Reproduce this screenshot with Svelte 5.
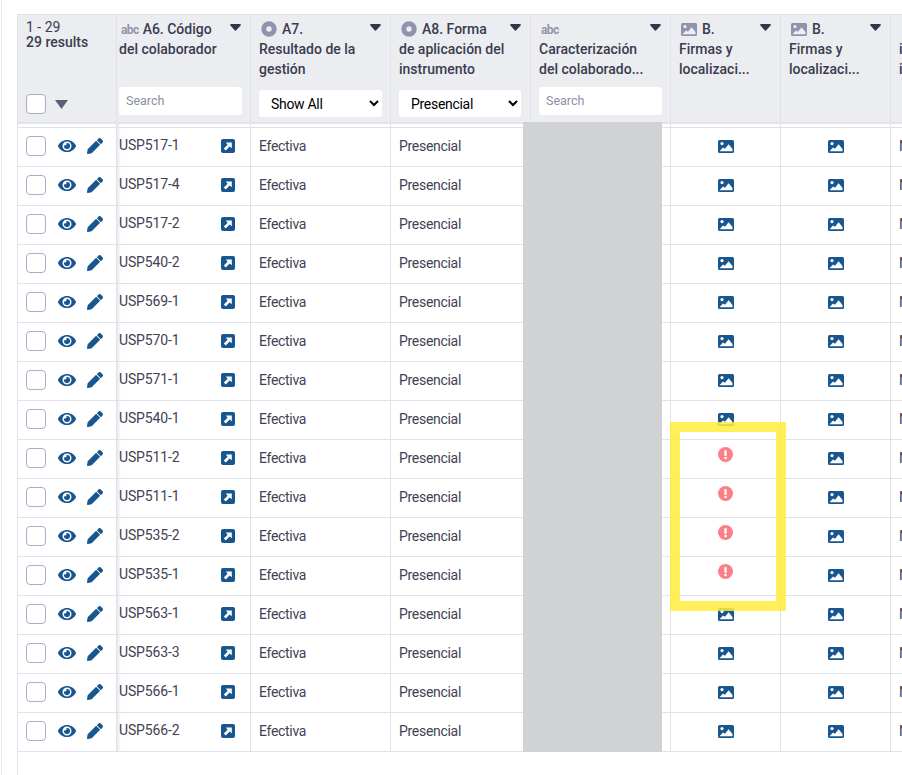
<script>
	const codes = [
		'USP517-1', 'USP517-4', 'USP517-2', 'USP540-2', 'USP569-1', 'USP570-1', 'USP571-1', 'USP540-1',
		'USP511-2', 'USP511-1', 'USP535-2', 'USP535-1', 'USP563-1', 'USP563-3', 'USP566-1', 'USP566-2'
	];
	const failed = ['USP511-2', 'USP511-1', 'USP535-2', 'USP535-1'];
	const spacer = [0, 1, 2, 3, 4, 5, 6, 7];
</script>

{#snippet caret()}
	<svg class="caret" viewBox="0 0 11 7"><path d="M1 0h9c.8 0 1.2 1 .6 1.6L6 6.4c-.3.3-.8.3-1.1 0L.4 1.6C-.2 1 .2 0 1 0z" /></svg>
{/snippet}

{#snippet radioIcon()}
	<svg class="type-icon radio" viewBox="0 0 16 16"><circle cx="8" cy="8" r="5.2" fill="none" stroke="#8f93ab" stroke-width="5" /></svg>
{/snippet}

{#snippet imageIcon(cls, bg, fg)}
	<svg class={cls} viewBox="0 0 16 13">
		<rect width="16" height="13" rx="1.5" fill={bg} />
		<circle cx="4" cy="3.6" r="1.6" fill={fg} />
		<path d="M1.5 11.2 L5 7.4 L7 8.8 L10.6 4.2 L14.5 9 V11.2 Z" fill={fg} />
	</svg>
{/snippet}

<div class="page">
	<div class="grid">
		<div class="row head">
			<div class="cell col1">
				<div class="count">1 - 29<br /><b>29 results</b></div>
				<div class="select-all">
					<span class="check"></span>
					<svg class="sort" viewBox="0 0 13 9"><path d="M0 0h13L6.5 9z" /></svg>
				</div>
			</div>
			<div class="cell code">
				<div class="title"><span class="abc">abc</span><span class="grow">A6. Código</span>{@render caret()}</div>
				<div class="line">del colaborador</div>
				<input class="search" placeholder="Search" />
			</div>
			<div class="cell">
				<div class="title">{@render radioIcon()}<span class="grow">A7.</span>{@render caret()}</div>
				<div class="line">Resultado de la</div>
				<div class="line">gestión</div>
				<select class="filter"><option>Show All</option><option>Efectiva</option></select>
			</div>
			<div class="cell">
				<div class="title">{@render radioIcon()}<span class="grow">A8. Forma</span>{@render caret()}</div>
				<div class="line">de aplicación del</div>
				<div class="line">instrumento</div>
				<select class="filter short"><option>Presencial</option><option>Show All</option></select>
			</div>
			<div class="cell">
				<div class="title"><span class="abc grow">abc</span>{@render caret()}</div>
				<div class="line">Caracterización</div>
				<div class="line">del colaborado...</div>
				<input class="search" placeholder="Search" />
			</div>
			<div class="cell">
				<div class="title">{@render imageIcon('type-icon picture', '#8f93ab', '#eceef3')}<span class="grow">B.</span>{@render caret()}</div>
				<div class="line">Firmas y</div>
				<div class="line">localizaci...</div>
			</div>
			<div class="cell">
				<div class="title">{@render imageIcon('type-icon picture', '#8f93ab', '#eceef3')}<span class="grow">B.</span>{@render caret()}</div>
				<div class="line">Firmas y</div>
				<div class="line">localizaci...</div>
			</div>
			<div class="cell">
				<div class="title">&nbsp;</div>
				<div class="line">incidencias</div>
				<div class="line">identificadas</div>
			</div>
		</div>

		<div class="row spacer">
			{#each spacer as i (i)}
				<div class="cell"></div>
			{/each}
		</div>

		<div class="rows">
			{#each codes as code (code)}
				<div class="row item">
					<div class="cell col1 actions">
						<span class="check"></span>
						<svg class="eye" viewBox="0 0 576 512"><path d="M572.52 241.4C518.29 135.59 410.93 64 288 64S57.68 135.64 3.48 241.41a32.35 32.35 0 0 0 0 29.19C57.71 376.41 165.07 448 288 448s230.32-71.64 284.52-177.41a32.35 32.35 0 0 0 0-29.19zM288 400a144 144 0 1 1 144-144 143.93 143.93 0 0 1-144 144zm0-240a95.31 95.31 0 0 0-25.31 3.79 47.85 47.85 0 0 1-66.9 66.9A95.78 95.78 0 1 0 288 160z" /></svg>
						<svg class="pencil" viewBox="0 0 512 512"><path d="M497.9 142.1l-46.1 46.1c-4.7 4.7-12.3 4.7-17 0l-111-111c-4.7-4.7-4.7-12.3 0-17l46.1-46.1c18.7-18.7 49.1-18.7 67.9 0l60.1 60.1c18.8 18.7 18.8 49.1 0 67.9zM284.2 99.8L21.6 362.4.4 483.9c-2.9 16.4 11.4 30.6 27.8 27.8l121.5-21.3 262.6-262.6c4.7-4.7 4.7-12.3 0-17l-111-111c-4.8-4.7-12.4-4.7-17.1 0z" /></svg>
					</div>
					<div class="cell code">
						<span class="code-text">{code}</span>
						<svg class="open" viewBox="0 0 14 14">
							<rect width="14" height="14" rx="2" fill="#17568f" />
							<path d="M2.8 9.6 L6.6 5.8 L4.8 3.4 H10.8 V9.2 L8.6 7.4 L4.8 11.4 Z" fill="#fff" />
						</svg>
					</div>
					<div class="cell text">Efectiva</div>
					<div class="cell text">Presencial</div>
					<div class="cell"></div>
					<div class="cell media">
						{#if failed.includes(code)}
							<svg class="error" viewBox="0 0 15 15">
								<circle cx="7.5" cy="7.5" r="7.5" fill="#fc7f86" />
								<rect x="6.3" y="3" width="2.4" height="6" rx="1" fill="#fff" />
								<circle cx="7.5" cy="11" r="1.3" fill="#fff" />
							</svg>
						{:else}
							{@render imageIcon('picture', '#17568f', '#fff')}
						{/if}
					</div>
					<div class="cell media">{@render imageIcon('picture', '#17568f', '#fff')}</div>
					<div class="cell text">No</div>
				</div>
			{/each}
		</div>
	</div>

	<!-- redaction block and highlight drawn over the table -->
	<div class="redacted"></div>
	<div class="highlight"></div>
</div>

<style>
	:global(body) {
		margin: 0;
		overflow: hidden;
	}

	.page {
		position: relative;
		box-sizing: border-box;
		width: 902px;
		height: 775px;
		overflow: hidden;
		background: #fff;
		padding: 14px 0 0 16px;
		border-left: 1px solid #e6e7ec;
		margin-left: 1px;
		font-family: Roboto, 'Liberation Sans', sans-serif;
		font-size: 14px;
		color: #3f4254;
	}

	.page::before {
		content: '';
		position: absolute;
		left: 15px;
		top: 14px;
		bottom: 0;
		width: 1px;
		background: #e0e1ea;
	}

	.grid {
		width: 980px;
		border-top: 1px solid #e0e1ea;
	}

	.row {
		display: grid;
		grid-template-columns: 99px 134px 140px 140px 140px 110px 110px 107px;
	}

	.cell {
		box-sizing: border-box;
		border-right: 1px solid #e0e1ea;
		padding: 0 8px;
		min-width: 0;
	}

	.head {
		height: 109px;
		background: #ecedf1;
		border-bottom: 2px solid #e3e4ea;
		box-sizing: border-box;
		color: #3a3c50;
		font-weight: 500;
		line-height: 20px;
	}

	.head .cell {
		display: flex;
		flex-direction: column;
		padding-top: 4px;
		padding-right: 9px;
	}

	.head .col1 {
		padding-top: 5px;
	}

	.count {
		font-size: 14px;
		font-weight: 400;
		line-height: 15px;
	}

	.count b {
		font-weight: 500;
	}

	.select-all {
		display: flex;
		align-items: center;
		gap: 9px;
		margin-top: auto;
		margin-bottom: 8px;
	}

	.check {
		display: block;
		box-sizing: border-box;
		width: 20px;
		height: 20px;
		flex: none;
		background: #fff;
		border: 1px solid #a9afc8;
		border-radius: 4px;
	}

	.sort {
		width: 13px;
		height: 9px;
		fill: #5c5f76;
	}

	.title {
		display: flex;
		align-items: center;
		height: 20px;
	}

	.grow {
		flex: 1;
	}

	.caret {
		width: 11px;
		height: 7px;
		margin-bottom: 3px;
		fill: #33354a;
	}

	.type-icon {
		flex: none;
		margin-right: 5px;
	}

	.radio {
		width: 16px;
		height: 16px;
		margin-left: 2px;
	}

	.type-icon.picture {
		width: 16px;
		height: 13px;
		margin-left: 2px;
		margin-right: 5px;
	}

	.abc {
		font-size: 12px;
		font-weight: 700;
		color: #9295ac;
		letter-spacing: -0.6px;
		padding: 2px 4px 0 2px;
	}

	.search {
		box-sizing: border-box;
		width: 123px;
		height: 28px;
		margin-top: auto;
		margin-bottom: 7px;
		flex: none;
		padding: 0 7px 2px;
		border: none;
		border-radius: 3px;
		background: #fff;
		font-family: inherit;
		font-size: 12.5px;
	}

	.search::placeholder {
		color: #8b8fa8;
	}

	.filter {
		box-sizing: border-box;
		width: 123px;
		height: 27px;
		margin-top: auto;
		margin-bottom: 5px;
		flex: none;
		padding: 0 0 0 8px;
		border: none;
		border-radius: 3px;
		background: #fff;
		color: #000;
		font-family: inherit;
		font-size: 14px;
		letter-spacing: -0.3px;
	}

	.filter.short {
		width: 122px;
	}

	.code,
	.head .code {
		padding-left: 2px;
	}

	.spacer {
		height: 3px;
	}

	.rows {
		border-bottom: 1px solid #e0e1ea;
	}

	.item {
		box-sizing: border-box;
		height: 39px;
		border-top: 1px solid #e0e1ea;
	}

	.item .cell {
		display: flex;
		align-items: center;
		padding-bottom: 2px;
	}

	.item .text {
		letter-spacing: -0.3px;
	}

	.actions svg {
		fill: #17568f;
	}

	.eye {
		width: 18px;
		height: 16px;
		margin-left: 12px;
	}

	.pencil {
		width: 16px;
		height: 16px;
		margin-left: 11px;
	}

	.item .code,
	.spacer .cell:nth-child(2) {
		background: linear-gradient(to right, #e8e9ee, #fff 4px);
	}

	.item .code {
		padding-right: 15px;
	}

	.code-text {
		flex: 1;
		letter-spacing: -0.15px;
		margin-bottom: 2px;
	}

	.open {
		width: 14px;
		height: 14px;
	}

	.media {
		justify-content: center;
	}

	.media .picture {
		width: 16px;
		height: 13px;
	}

	.error {
		width: 15px;
		height: 15px;
		margin-bottom: 7px;
	}

	.redacted {
		position: absolute;
		left: 521px;
		top: 122px;
		width: 139px;
		height: 630px;
		background: #d1d2d4;
	}

	.highlight {
		position: absolute;
		box-sizing: border-box;
		left: 668px;
		top: 422px;
		width: 116px;
		height: 189px;
		border: 10px solid rgba(255, 236, 60, 0.85);
	}
</style>
